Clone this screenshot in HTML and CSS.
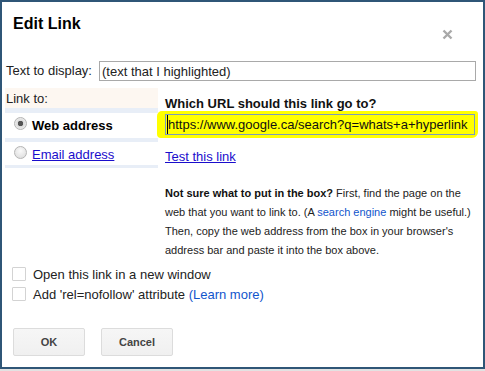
FILE: index.html
```html
<!DOCTYPE html>
<html lang="en">
<head>
    <meta charset="UTF-8">
    <meta name="viewport" content="width=device-width, initial-scale=1.0">
    <title>Edit Link</title>
    <link rel="stylesheet" href="styles.css">
</head>
<body>
    <div class="dialog">
        <div class="dialog-title">
            <h1>Edit Link</h1>
            <button class="close" type="button" aria-label="Close">
                <svg width="11" height="11" viewBox="0 0 11 11">
                    <path d="M1.5 1.5 L9.5 9.5 M9.5 1.5 L1.5 9.5" stroke="#a9a9a9" stroke-width="2.4" fill="none"/>
                </svg>
            </button>
        </div>

        <div class="display-row">
            <label for="displayText">Text to display:</label>
            <input type="text" id="displayText" class="text-input" value="(text that I highlighted)">
        </div>

        <div class="link-section">
            <div class="link-types">
                <div class="link-types-head">Link to:</div>
                <div class="link-type">
                    <span class="radio checked"></span>
                    <span class="link-type-label">Web address</span>
                </div>
                <div class="link-type">
                    <span class="radio"></span>
                    <a href="#" class="link-type-link">Email address</a>
                </div>
            </div>

            <div class="link-details">
                <div class="question">Which URL should this link go to?</div>
                <div class="highlight">
                    <input type="text" class="url-input" value="https://www.google.ca/search?q=whats+a+hyperlink">
                </div>
                <a href="#" class="test-link">Test this link</a>
                <p class="help">
                    <b>Not sure what to put in the box?</b> First, find the page on the<br>
                    web that you want to link to. (A <a href="#">search engine</a> might be useful.)<br>
                    Then, copy the web address from the box in your browser's<br>
                    address bar and paste it into the box above.
                </p>
            </div>
        </div>

        <div class="options">
            <label class="option"><span class="checkbox"></span><span>Open this link in a new window</span></label>
            <label class="option"><span class="checkbox"></span><span>Add 'rel=nofollow' attribute <a href="#">(Learn more)</a></span></label>
        </div>

        <div class="buttons">
            <button type="button" class="btn">OK</button>
            <button type="button" class="btn">Cancel</button>
        </div>
    </div>
</body>
</html>
```

FILE: styles.css
```css
body {
    margin: 0;
    padding: 0;
    background-color: #e2e2e2;
    font-family: "Liberation Sans", Arial, sans-serif;
    color: #222;
}
.dialog {
    box-sizing: border-box;
    width: 485px;
    height: 369px;
    background: #fff;
    border: 2px solid #2f5677;
}
.dialog-title {
    display: flex;
    justify-content: space-between;
    align-items: flex-start;
    height: 57px;
}
.dialog-title h1 {
    margin: 0;
    padding: 12px 0 0 11px;
    font-size: 16px;
    line-height: 20px;
    font-weight: bold;
    color: #000;
}
.close {
    margin: 27px 30px 0 0;
    padding: 0;
    border: none;
    background: none;
    width: 11px;
    height: 11px;
    display: flex;
}
.display-row {
    display: flex;
    margin-top: 2px;
    padding: 0 7px 0 4px;
    height: 20px;
    font-size: 13px;
}
.display-row label {
    width: 93px;
    line-height: 20px;
    color: #222;
}
.text-input {
    flex: 1;
    box-sizing: border-box;
    height: 20px;
    margin: 0;
    padding: 0 2px;
    border: 1px solid #a9a9a9;
    font-family: inherit;
    font-size: 13px;
    color: #222;
}
.link-section {
    display: flex;
    gap: 7px;
    margin-top: 7px;
    padding: 0 8px 0 3px;
}
.link-types {
    width: 153px;
    align-self: flex-start;
    background: #e8eef7;
    padding-bottom: 3px;
    font-size: 13px;
}
.link-types-head {
    height: 20px;
    line-height: 21px;
    padding-left: 1px;
    background: #fdf7f1;
}
.link-type {
    display: flex;
    align-items: center;
    gap: 5px;
    height: 25px;
    margin-top: 5px;
    padding-left: 9px;
    background: #fff;
}
.link-type + .link-type {
    height: 23px;
    margin-top: 4px;
}
.link-type + .link-type .radio {
    margin-bottom: 2px;
}
.link-type-label {
    font-weight: bold;
    color: #000;
}
.link-type-link {
    margin-top: 2px;
    color: #1a0dcc;
}
.radio {
    box-sizing: border-box;
    width: 13px;
    height: 13px;
    margin-bottom: 4px;
    border: 1px solid #b5b5b5;
    border-radius: 50%;
    background: radial-gradient(circle at 50% 35%, #fafafa, #d9d9d9);
}
.radio.checked {
    background: radial-gradient(circle, #555 0, #555 2.5px, #dcdcdc 3px, #eee 6px);
}
.link-details {
    flex: 1;
    padding-top: 7px;
    font-size: 13px;
}
.question {
    font-weight: bold;
    line-height: 17px;
    color: #111;
}
.highlight {
    margin: -1px -3px 0 -8px;
    padding: 3px 3px 3px 8px;
    background: #ffff00;
    border-radius: 5px 3px 6px 4px;
}
.url-input {
    display: block;
    box-sizing: border-box;
    width: 100%;
    height: 21px;
    margin: 0;
    padding: 0 2px;
    border: 1px solid #7b9bbd;
    background: transparent;
    font-family: inherit;
    font-size: 13px;
    color: #111;
    box-shadow: inset 1px 0 0 #ffff00, inset 2px 0 0 #000;
}
.test-link {
    display: inline-block;
    margin-top: 10px;
    line-height: 17px;
    color: #1a0dcc;
}
.help {
    margin: 19px 0 0;
    font-size: 11px;
    line-height: 19px;
    white-space: nowrap;
    color: #222;
}
.help b {
    color: #111;
}
.help a {
    color: #15c;
    text-decoration: none;
}
.options {
    margin-top: 4px;
    padding-left: 10px;
    font-size: 13px;
}
.option {
    display: flex;
    align-items: center;
    gap: 7px;
    height: 20px;
    color: #222;
}
.option a {
    color: #15c;
    text-decoration: none;
}
.checkbox {
    box-sizing: border-box;
    width: 14px;
    height: 14px;
    border: 1px solid #d3d3d3;
    border-radius: 1px;
    background: #fff;
}
.buttons {
    display: flex;
    gap: 16px;
    margin-top: 24px;
    padding-left: 11px;
}
.btn {
    width: 72px;
    height: 28px;
    padding: 0;
    border: 1px solid #dcdcdc;
    border-radius: 2px;
    background: linear-gradient(#f6f6f6, #f0f0f0);
    font-family: inherit;
    font-size: 11px;
    font-weight: bold;
    color: #444;
}
```
